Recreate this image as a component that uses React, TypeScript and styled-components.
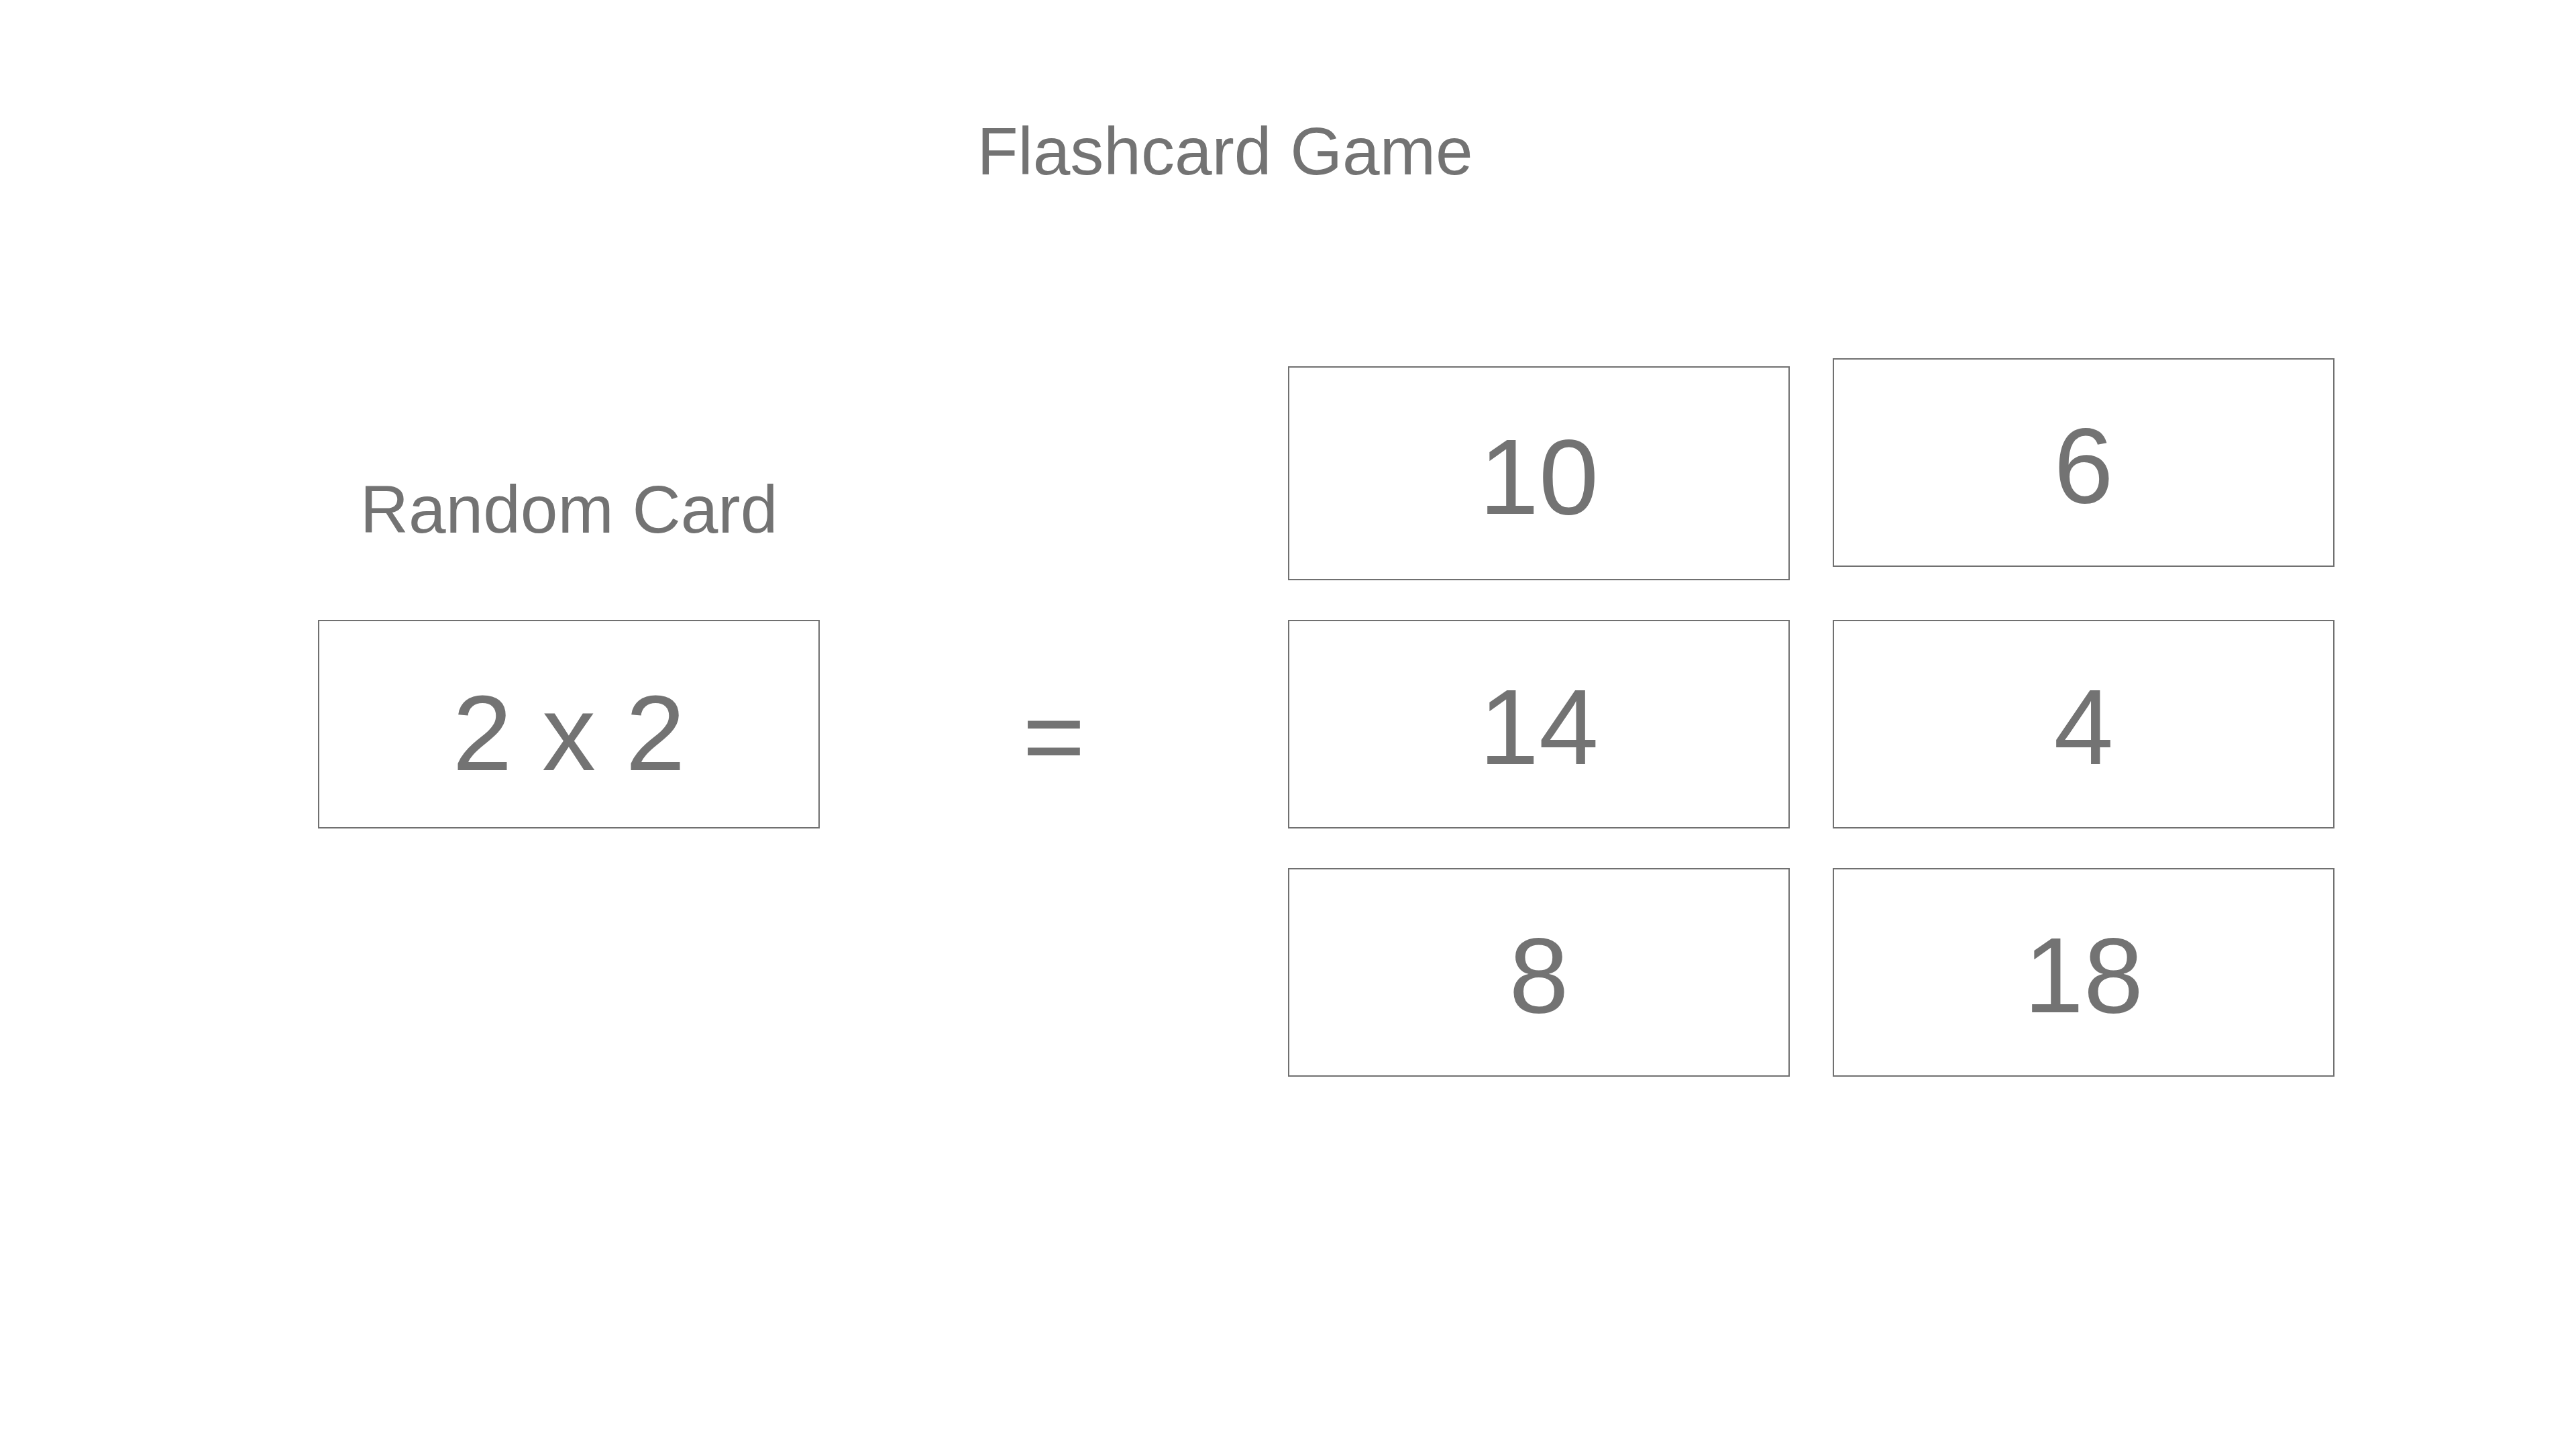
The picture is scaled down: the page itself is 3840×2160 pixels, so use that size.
import React, { FC } from "react";
import styled, { createGlobalStyle } from "styled-components";

const GlobalStyle = createGlobalStyle`
  html, body {
    margin: 0;
    padding: 0;
    background: #ffffff;
  }

  body {
    font-family: "Liberation Sans", Arial, Helvetica, sans-serif;
    color: #737373;
  }
`;

const Page = styled.main`
  width: 3840px;
  height: 2160px;
  box-sizing: border-box;
  padding-top: 175px;
`;

const Title = styled.h1`
  margin: 0;
  padding-right: 188px;
  text-align: center;
  font-size: 100px;
  line-height: 100px;
  font-weight: 400;
  color: #737373;
`;

const Board = styled.section`
  display: grid;
  grid-template-columns: 748px 570px 748px 748px;
  grid-template-rows: auto 311px 311px;
  column-gap: 64px;
  row-gap: 59px;
  margin-top: 259px;
  padding-left: 474px;
`;

const CardLabel = styled.div`
  grid-column: 1;
  grid-row: 1;
  align-self: end;
  margin-bottom: 56px;
  text-align: center;
  font-size: 100px;
  line-height: 100px;
`;

interface CardProps {
  $height?: number;
  $shift?: number;
  $pad?: number;
}

const Card = styled.div<CardProps>`
  box-sizing: border-box;
  width: 748px;
  height: ${({ $height }) => $height ?? 311}px;
  margin-top: ${({ $shift }) => $shift ?? 0}px;
  padding-top: ${({ $pad }) => $pad ?? 78}px;
  border: 2px solid #707070;
  background: #ffffff;
  text-align: center;
  font-size: 160px;
  line-height: 160px;
  white-space: pre;
  color: #737373;
`;

const RandomSlot = styled.div`
  grid-column: 1;
  grid-row: 2;
`;

const Equals = styled.div`
  grid-column: 2;
  grid-row: 2;
  padding-top: 94px;
  text-align: center;
  font-size: 160px;
  line-height: 160px;
`;

const AnswerSlot = styled.div<{ $col: number; $row: number }>`
  grid-column: ${({ $col }) => $col};
  grid-row: ${({ $row }) => $row};
  align-self: start;
`;

type Answer = {
  value: number;
  col: number;
  row: number;
  height?: number;
  shift?: number;
  pad?: number;
};

const answers: Answer[] = [
  { value: 10, col: 3, row: 1, height: 319, shift: 12, pad: 83 },
  { value: 6, col: 4, row: 1 },
  { value: 14, col: 3, row: 2 },
  { value: 4, col: 4, row: 2 },
  { value: 8, col: 3, row: 3 },
  { value: 18, col: 4, row: 3 },
];

const App: FC = () => {
  return (
    <>
      <GlobalStyle />
      <Page>
        <Title>Flashcard Game</Title>
        <Board>
          <CardLabel>Random Card</CardLabel>
          <RandomSlot>
            <Card $pad={87}>2 x 2</Card>
          </RandomSlot>
          <Equals>=</Equals>
          {answers.map((a) => (
            <AnswerSlot key={a.value} $col={a.col} $row={a.row}>
              <Card $height={a.height} $shift={a.shift} $pad={a.pad}>
                {a.value}
              </Card>
            </AnswerSlot>
          ))}
        </Board>
      </Page>
    </>
  );
};

export default App;
